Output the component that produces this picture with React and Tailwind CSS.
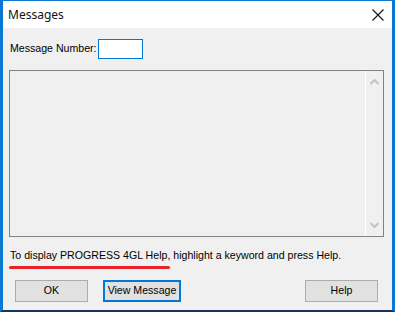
const ChevronUp = () => (
	<svg width="9" height="6" viewBox="0 0 9 6" className="block">
		<path d="M0.5 5 L4.5 1 L8.5 5" fill="none" stroke="#c2c2c2" strokeWidth="2" />
	</svg>
);

const ChevronDown = () => (
	<svg width="9" height="6" viewBox="0 0 9 6" className="block">
		<path d="M0.5 1 L4.5 5 L8.5 1" fill="none" stroke="#c2c2c2" strokeWidth="2" />
	</svg>
);

const CloseIcon = () => (
	<svg width="12" height="12" viewBox="0 0 12 12" className="block">
		<path d="M0.5 0.5 L11.5 11.5 M11.5 0.5 L0.5 11.5" stroke="#111" strokeWidth="1.1" />
	</svg>
);

export default function App() {
	return (
		<div
			className="w-[395px] h-[312px] flex flex-col bg-[#f0f0f0] border-l-[3px] border-r-[3px] border-t border-b-2 border-l-[#0b78d4] border-r-[#0b78d4] border-t-[#0b78d4] border-b-[#17355a] text-black"
			style={{ fontFamily: '"Liberation Sans", Arial, sans-serif' }}
		>
			{/* title bar */}
			<div className="h-[27px] bg-white flex items-center justify-between pl-[5px] pr-[8px]">
				<span
					className="text-[12px] text-[#111]"
					style={{ fontFamily: '"Noto Sans", "Open Sans", sans-serif' }}
				>
					Messages
				</span>
				<CloseIcon />
			</div>

			{/* body */}
			<div className="flex-1 flex flex-col pl-[6px] pr-[8px]">
				<div className="flex items-center mt-[11px] h-[20px] pl-[1px] text-[10.6px]">
					<span>Message Number:</span>
					<div className="ml-[1px] w-[45px] h-[20px] bg-white border border-[#0078d7]" />
				</div>

				<div className="mt-[11px] w-[375px] h-[167px] border border-[#828282] flex justify-end">
					<div className="w-[18px] h-full border-l border-white flex flex-col items-center justify-between py-[8px]">
						<ChevronUp />
						<ChevronDown />
					</div>
				</div>

				<div className="mt-[12px] pl-[1px] text-[10.6px] leading-[13px]">
					To display PROGRESS 4GL Help, highlight a keyword and press Help.
				</div>
				<div className="mt-[4px] w-[161px] h-[3px] rounded-full bg-[#e8202a]" />

				<div className="mt-[11px] mr-[6px] flex items-center text-[10.6px]">
					<button className="ml-[6px] w-[73px] h-[22px] bg-[#e1e1e1] border border-[#adadad] flex items-center justify-center">
						OK
					</button>
					<button className="ml-[15px] w-[78px] h-[22px] bg-[#e1e1e1] border-2 border-[#0078d7] flex items-center justify-center">
						View Message
					</button>
					<button className="ml-auto w-[73px] h-[22px] bg-[#e1e1e1] border border-[#adadad] flex items-center justify-center">
						Help
					</button>
				</div>
			</div>
		</div>
	);
}
